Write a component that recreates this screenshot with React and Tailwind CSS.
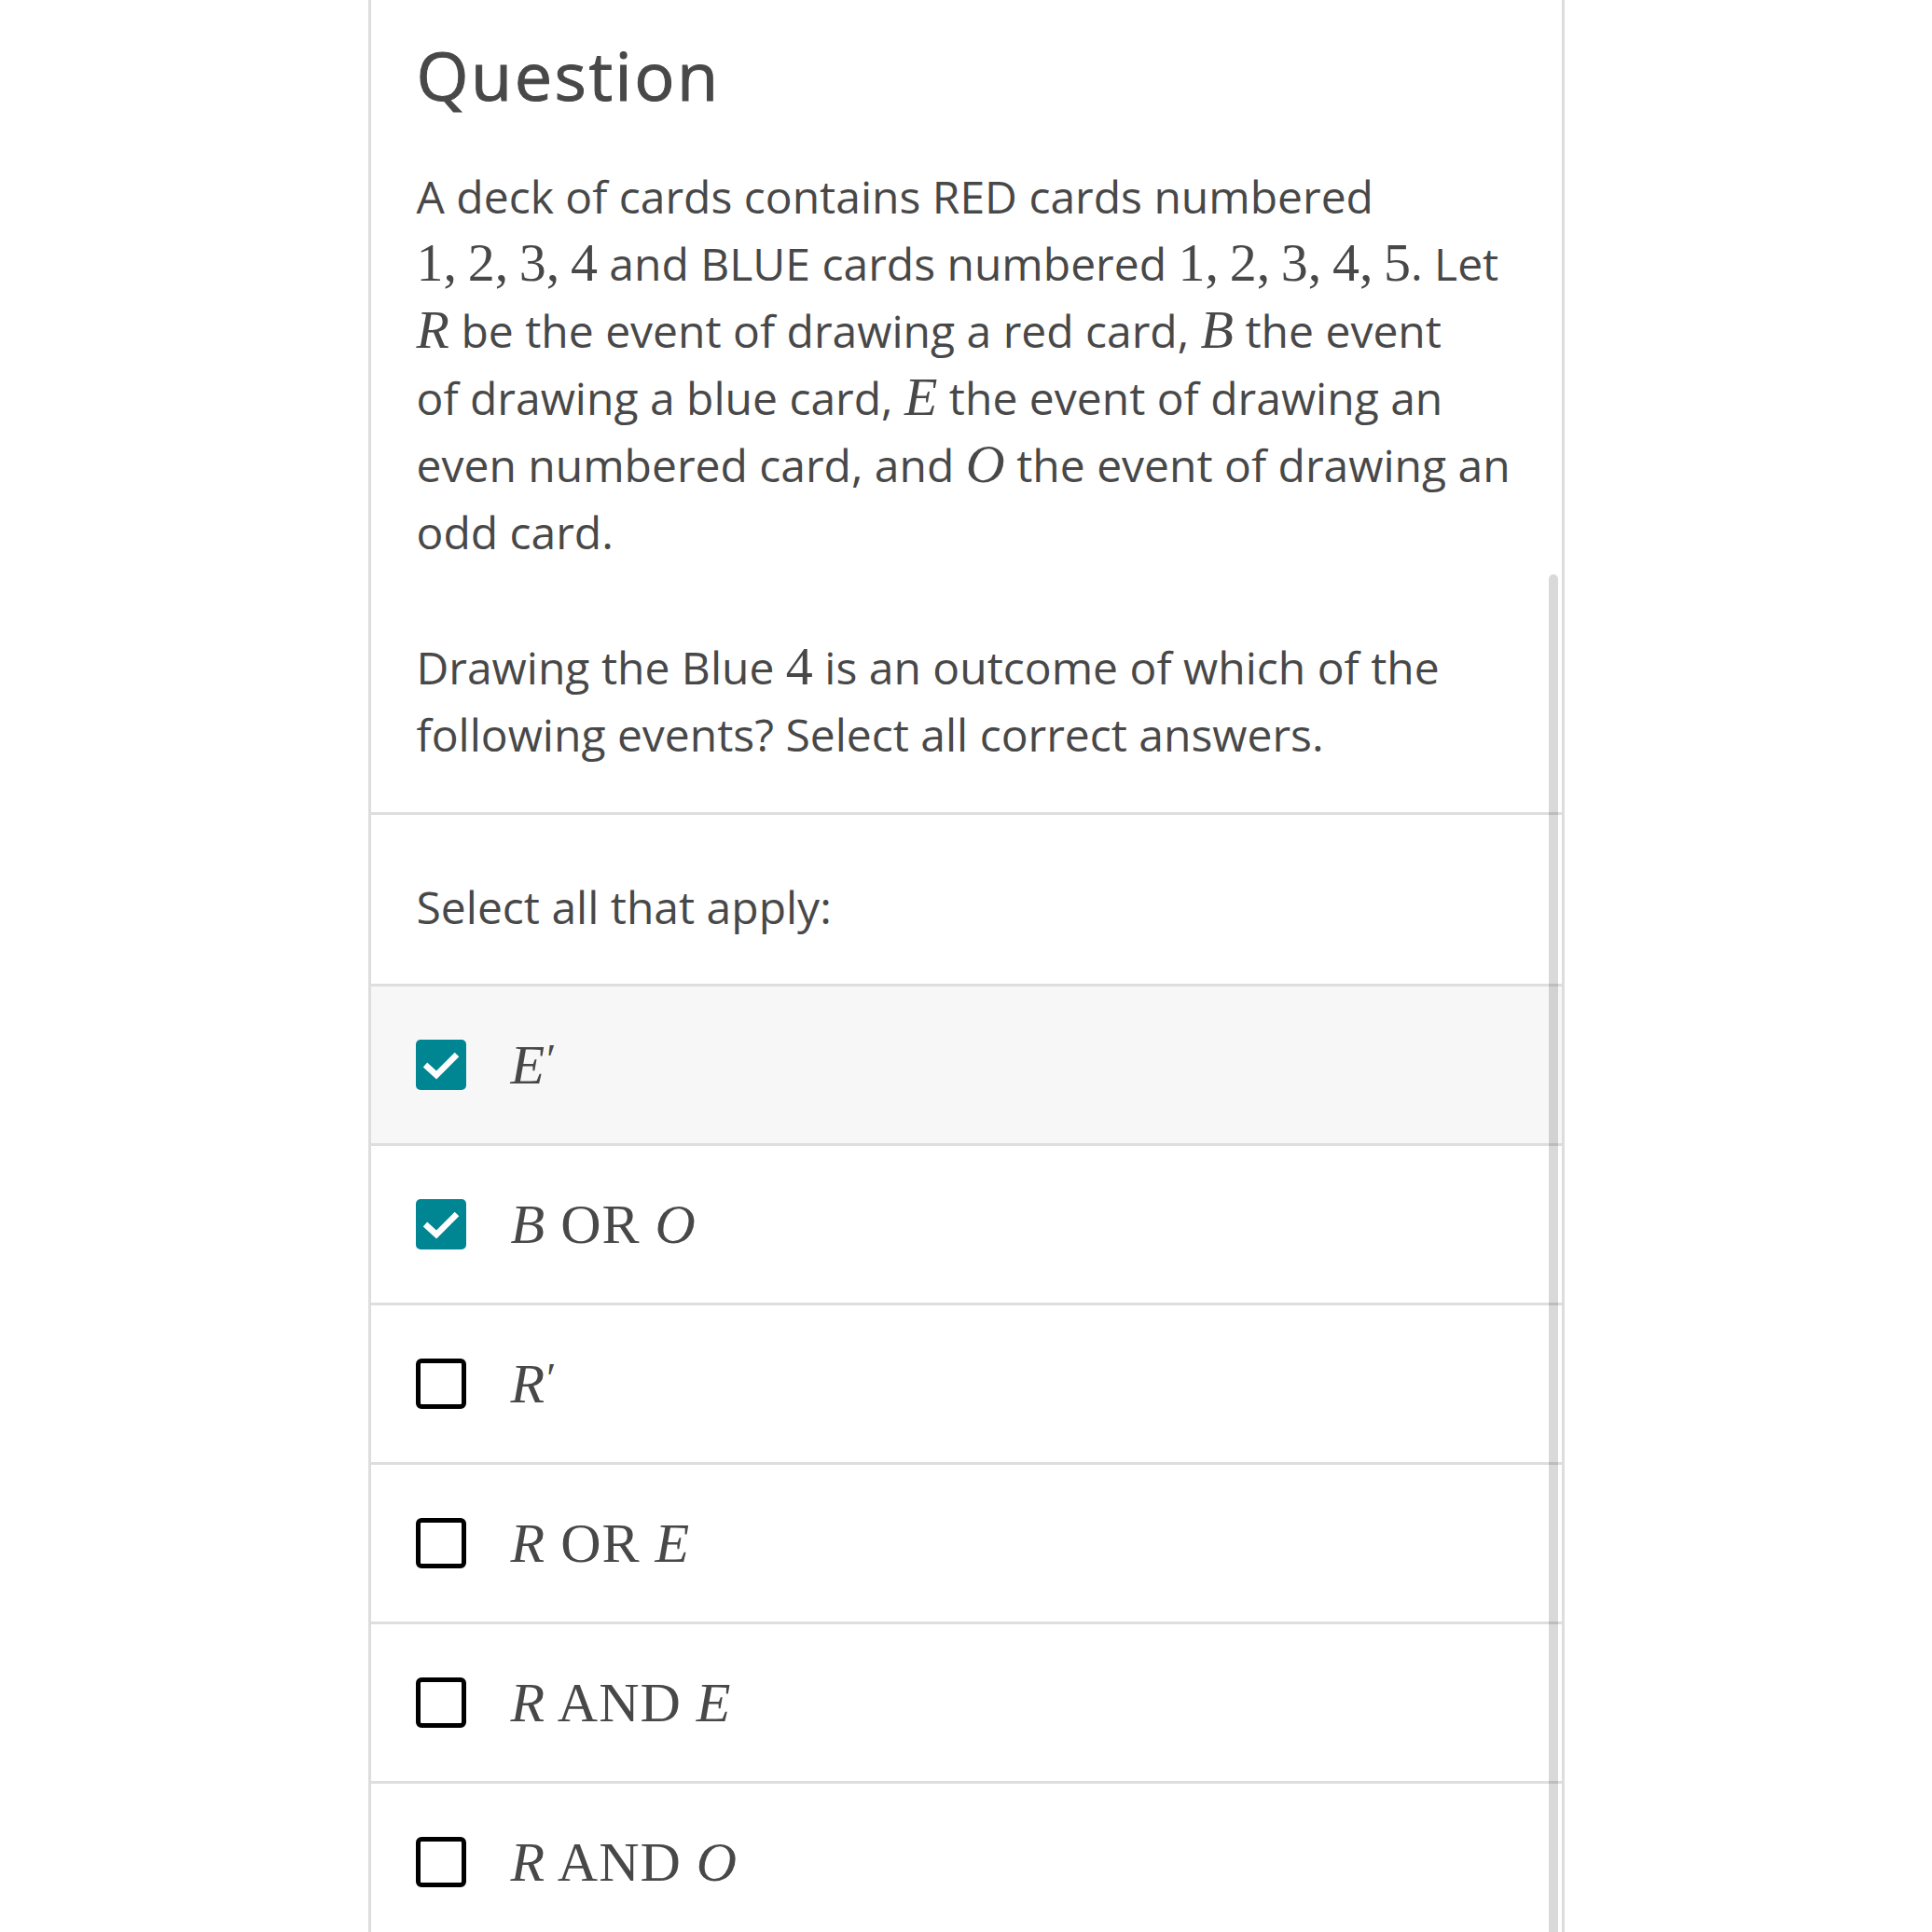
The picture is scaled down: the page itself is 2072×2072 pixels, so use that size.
import { useState } from "react";

// inline math pieces, serif like the KaTeX output
const M = ({ children, big }) => (
	<span
		className={`font-['Liberation_Serif',serif] leading-none ${
			big ? "text-[60px] tracking-[1px]" : "text-[58px]"
		}`}
	>
		{children}
	</span>
);
const V = ({ children }) => <i className="italic">{children}</i>;
const Prime = () => (
	<span className="relative -top-[10px] ml-[1px] text-[46px] not-italic">′</span>
);

const options = [
	{ id: "e-prime", checked: true, label: <><V>E</V><Prime /></> },
	{ id: "b-or-o", checked: true, label: <><V>B</V> OR <V>O</V></> },
	{ id: "r-prime", checked: false, label: <><V>R</V><Prime /></> },
	{ id: "r-or-e", checked: false, label: <><V>R</V> OR <V>E</V></> },
	{ id: "r-and-e", checked: false, label: <><V>R</V> AND <V>E</V></> },
	{ id: "r-and-o", checked: false, label: <><V>R</V> AND <V>O</V></> },
];

const CheckBox = ({ checked }) => {
	if (checked) {
		return (
			<div className="w-[54px] h-[54px] shrink-0 rounded-[5px] bg-[#008592] flex items-center justify-center">
				<svg width="54" height="54" viewBox="0 0 54 54">
					<polyline
						points="10,27 22,38 44,16"
						fill="none"
						stroke="#ffffff"
						strokeWidth="6.5"
					/>
				</svg>
			</div>
		);
	}
	return (
		<div className="w-[54px] h-[54px] shrink-0 rounded-[6px] border-[5px] border-black bg-white" />
	);
};

const Line = ({ children }) => <span className="block whitespace-nowrap">{children}</span>;

const App = () => {
	const [selected, setSelected] = useState(
		options.reduce((acc, o) => ({ ...acc, [o.id]: o.checked }), {})
	);

	return (
		<div className="w-full h-[2072px] overflow-hidden bg-white font-['Open_Sans',sans-serif] text-[#484848]">
			<div className="relative mx-auto w-[1283px] h-full border-x-[3px] border-[#dddddd]">
				{/* question text */}
				<div className="px-[49px] pt-[37px] pb-[47px]">
					<h1 className="text-[72px] leading-[86px] font-normal tracking-[2.5px] [-webkit-text-stroke:1px_#484848]">
						Question
					</h1>
					<p className="mt-[52px] text-[48px] leading-[72px]">
						<Line>A deck of cards contains RED cards numbered</Line>
						<Line>
							<M>1,{"\u2009"}2,{"\u2009"}3,{"\u2009"}4</M> and BLUE cards numbered{" "}
							<M>1,{"\u2009"}2,{"\u2009"}3,{"\u2009"}4,{"\u2009"}5</M>. Let
						</Line>
						<Line>
							<M><V>R</V></M> be the event of drawing a red card, <M><V>B</V></M> the event
						</Line>
						<Line>
							of drawing a blue card, <M><V>E</V></M> the event of drawing an
						</Line>
						<Line>
							even numbered card, and <M><V>O</V></M> the event of drawing an
						</Line>
						<Line>odd card.</Line>
					</p>
					<p className="mt-[73px] text-[48px] leading-[72px]">
						<Line>
							Drawing the Blue <M>4</M> is an outcome of which of the
						</Line>
						<Line>following events? Select all correct answers.</Line>
					</p>
				</div>

				<div className="border-t-[3px] border-[#dedede] px-[49px] pt-[63px] pb-[46px] text-[48px] leading-[72px]">
					Select all that apply:
				</div>

				<ul>
					{options.map((opt, i) => (
						<li
							key={opt.id}
							onClick={() =>
								setSelected((prev) => ({ ...prev, [opt.id]: !prev[opt.id] }))
							}
							className={`border-t-[3px] border-[#dedede] h-[171px] flex items-center gap-[48px] pl-[48px] cursor-pointer ${
								i === 0 ? "bg-[#f7f7f7]" : "bg-white"
							}`}
						>
							<CheckBox checked={selected[opt.id]} />
							<M big>{opt.label}</M>
						</li>
					))}
				</ul>
				<div className="border-t-[3px] border-[#dedede]" />

				{/* overlay scrollbar */}
				<div className="absolute right-[4px] top-[616px] w-[10px] h-[1600px] rounded-full bg-black/15" />
			</div>
		</div>
	);
};

export default App;
